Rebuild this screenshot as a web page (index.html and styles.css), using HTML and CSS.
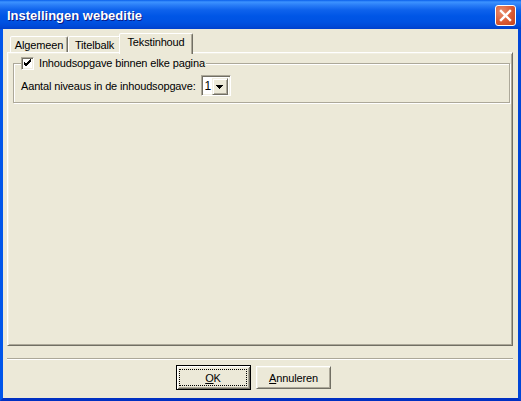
FILE: index.html
```html
<!DOCTYPE html>
<html>
<head>
<meta charset="utf-8">
<title>Instellingen webeditie</title>
<link rel="stylesheet" href="styles.css">
</head>
<body>
<div class="window">
  <div class="titlebar">
    <span class="title">Instellingen webeditie</span>
    <button class="close" aria-label="Sluiten">
      <svg width="19" height="19" viewBox="0 0 19 19"><path d="M5 5 L14 14 M14 5 L5 14" stroke="#fff" stroke-width="2.4" stroke-linecap="square" fill="none"/></svg>
    </button>
  </div>
  <div class="frame">
    <div class="tabs">
      <div class="tabstrip">
        <div class="tab tab-algemeen">Algemeen</div>
        <div class="tab tab-titelbalk">Titelbalk</div>
        <div class="tab tab-active">Tekstinhoud</div>
      </div>
      <div class="panel">
        <fieldset class="group">
          <legend class="legend">
            <span class="checkbox">
              <svg width="11" height="11" viewBox="0 0 11 11" shape-rendering="crispEdges"><polygon points="1.5,3.5 3.5,5.5 8.5,0.5 8.5,3.5 3.5,8.5 1.5,6.5" fill="#000"/></svg>
            </span>
            <span class="legend-text">Inhoudsopgave binnen elke pagina</span>
          </legend>
          <div class="row">
            <span class="label">Aantal niveaus in de inhoudsopgave:</span>
            <div class="combo">
              <span class="combo-value">1</span>
              <span class="combo-btn">
                <svg width="7" height="4" viewBox="0 0 7 4" shape-rendering="crispEdges"><polygon points="0,0 7,0 3.5,4" fill="#000"/></svg>
              </span>
            </div>
          </div>
        </fieldset>
      </div>
    </div>
    <div class="separator"></div>
    <div class="buttons">
      <button class="btn btn-default"><span class="focus"><u>O</u>K</span></button>
      <button class="btn"><span class="nofocus"><u>A</u>nnuleren</span></button>
    </div>
  </div>
</div>
</body>
</html>
```

FILE: styles.css
```css
* { box-sizing: border-box; }
html, body { margin: 0; padding: 0; }
body {
  background: #fff;
  font-family: "Liberation Sans", Arial, sans-serif;
  font-size: 11px;
  letter-spacing: -0.15px;
  color: #000;
}
.window {
  width: 521px;
  height: 401px;
  display: flex;
  flex-direction: column;
  background: #ECE9D8;
}
.titlebar {
  height: 29px;
  flex: none;
  display: flex;
  align-items: center;
  justify-content: space-between;
  padding: 0 5px 0 7px;
  background: linear-gradient(to bottom,
    #0A5FEA 0px, #3D93FF 2px, #2A7EF7 5px, #0E62EC 10px,
    #0056E6 16px, #0052E2 22px, #004AD8 26px, #0040CC 29px);
}
.title {
  margin-top: 2px;
  color: #fff;
  font-weight: bold;
  font-size: 13px;
  letter-spacing: 0;
  line-height: 15px;
  text-shadow: 1px 1px 0 #0A1883;
}
.close {
  margin-top: 2px;
  width: 21px;
  height: 21px;
  padding: 0;
  display: flex;
  align-items: center;
  justify-content: center;
  border: 1px solid #fff;
  border-radius: 3px;
  background: radial-gradient(circle at 30% 30%, #E98F6F 0%, #DA5A34 55%, #C4421B 100%);
}
.frame {
  flex: 1;
  display: flex;
  flex-direction: column;
  border: 3px solid;
  border-top: 0;
  border-color: #0055EA #0046D8 #0030C2 #0055EA;
  padding: 4px 5px 0 4px;
}
.tabstrip {
  height: 19px;
  display: flex;
  align-items: flex-end;
  padding-left: 3px;
  position: relative;
  z-index: 1;
}
.tab {
  height: 16px;
  padding-top: 2px;
  line-height: 13px;
  text-align: center;
  background: #ECE9D8;
  border: 1px solid;
  border-bottom: 0;
  border-color: #fff #716F64 transparent #fff;
  border-radius: 2px 2px 0 0;
  box-shadow: inset -1px 0 0 #ACA899;
}
.tab-algemeen { width: 58px; }
.tab-titelbalk { width: 53px; }
.tab-active {
  width: 74px;
  height: 21px;
  margin: 0 0 -2px -2px;
  position: relative;
}
.panel {
  height: 294px;
  border: 1px solid;
  border-color: #fff #716F64 #716F64 #fff;
  box-shadow: inset 1px 1px 0 #F1EFE2, inset -1px -1px 0 #ACA899;
  padding: 4px 2px 0 5px;
}
.group {
  margin: 0;
  min-width: 0;
  padding: 5px 7px 6px 7px;
  border: 1px solid #ACA899;
  box-shadow: 1px 1px 0 #fff, inset 1px 1px 0 #fff;
}
.legend {
  padding: 0 1px 0 0;
  height: 13px;
  display: flex;
  align-items: center;
  background: #ECE9D8;
}
.checkbox {
  width: 13px;
  height: 13px;
  margin-right: 5px;
  display: flex;
  align-items: center;
  justify-content: center;
  background: #fff;
  border: 1px solid;
  border-color: #ACA899 #fff #fff #ACA899;
  box-shadow: inset 1px 1px 0 #716F64, inset -1px -1px 0 #F1EFE2;
}
.legend-text { line-height: 13px; }
.row {
  display: flex;
  align-items: center;
  gap: 5px;
}
.combo {
  width: 30px;
  height: 21px;
  display: flex;
  padding: 2px;
  background: #fff;
  border: 1px solid;
  border-color: #ACA899 #fff #fff #ACA899;
  box-shadow: inset 1px 1px 0 #716F64, inset -1px -1px 0 #F1EFE2;
}
.combo-value {
  flex: 1;
  padding-left: 1px;
  line-height: 17px;
  font-size: 12px;
}
.combo-btn {
  width: 16px;
  height: 17px;
  display: flex;
  align-items: center;
  justify-content: center;
  background: #ECE9D8;
  border: 1px solid;
  border-color: #F1EFE2 #716F64 #716F64 #F1EFE2;
  box-shadow: inset 1px 1px 0 #fff, inset -1px -1px 0 #ACA899;
}
.separator {
  height: 2px;
  margin-top: 12px;
  border-top: 1px solid #ACA899;
  border-bottom: 1px solid #fff;
}
.buttons {
  display: flex;
  align-items: center;
  gap: 5px;
  height: 25px;
  margin-top: 5px;
  padding-left: 169px;
}
.btn {
  width: 75px;
  height: 23px;
  padding: 0;
  display: flex;
  align-items: center;
  justify-content: center;
  font-family: "Liberation Sans", Arial, sans-serif;
  font-size: 11px;
  letter-spacing: -0.15px;
  color: #000;
  background: #ECE9D8;
  border: 1px solid;
  border-color: #fff #716F64 #716F64 #fff;
  box-shadow: inset 1px 1px 0 #F1EFE2, inset -1px -1px 0 #ACA899;
}
.btn-default {
  height: 25px;
  padding: 3px 3px 3px 2px;
  border: 1px solid #000;
  box-shadow: inset 1px 1px 0 #fff, inset -1px -1px 0 #716F64,
              inset 2px 2px 0 #F1EFE2, inset -2px -2px 0 #ACA899;
}
.focus {
  flex: 1;
  align-self: stretch;
  display: flex;
  align-items: center;
  justify-content: center;
  border: 1px dotted #000;
}
```
